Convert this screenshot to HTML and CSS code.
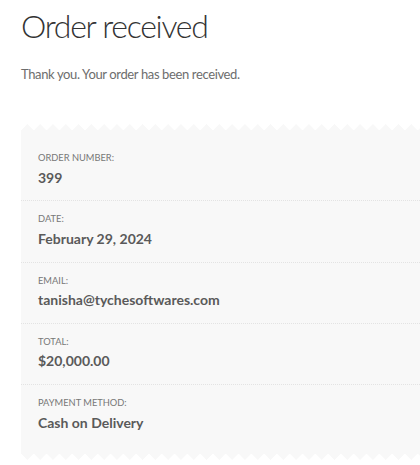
FILE: index.html
```html
<!DOCTYPE html>
<html>
<head>
    <title>Order received</title>
    <link rel="stylesheet" href="styles.css">
</head>
<body>
    <h1 class="entry-title">Order received</h1>

    <p class="thankyou">Thank you. Your order has been received.</p>

    <div class="order-overview">
        <ul class="order-details">
            <li>
                <span class="label">Order number:</span>
                <strong>399</strong>
            </li>
            <li>
                <span class="label">Date:</span>
                <strong>February 29, 2024</strong>
            </li>
            <li>
                <span class="label">Email:</span>
                <strong>tanisha@tychesoftwares.com</strong>
            </li>
            <li>
                <span class="label">Total:</span>
                <strong>$20,000.00</strong>
            </li>
            <li>
                <span class="label">Payment method:</span>
                <strong>Cash on Delivery</strong>
            </li>
        </ul>
    </div>
</body>
</html>
```

FILE: styles.css
```css
body {
    font-family: Lato, "Open Sans", sans-serif;
    color: #6d6d6d;
    margin: 0;
    padding: 0 0 0 21px;
    background: #fff;
}
.entry-title {
    font-size: 32px;
    font-weight: 300;
    color: #333;
    margin: 6px 0 0 0;
    line-height: 40px;
    letter-spacing: -1.3px;
}
.thankyou {
    font-size: 13px;
    margin: 18px 0 0 0;
    line-height: 20px;
    letter-spacing: -0.37px;
}
.order-overview {
    margin-top: 40px;
}
.order-overview::before,
.order-overview::after {
    content: "";
    display: block;
    height: 7px;
    background-size: 12.8px 7px;
    background-repeat: repeat-x;
}
.order-overview::before {
    background-image: conic-gradient(from 137deg at 50% 0, #f8f8f8 86deg, transparent 0);
}
.order-overview::after {
    background-image: conic-gradient(from -43deg at 50% 100%, #f8f8f8 86deg, transparent 0);
}
.order-details {
    list-style: none;
    margin: 0;
    padding: 9px 0 8px 0;
    background: #f8f8f8;
}
.order-details li {
    padding: 12px 17px 11.8px 17px;
    border-bottom: 1px dotted #e3e3e3;
    font-size: 9.3px;
    text-transform: uppercase;
    line-height: 12px;
    color: #777;
}
.order-details li:last-child {
    border-bottom: none;
}
.order-details .label {
    display: block;
}
.order-details strong {
    display: block;
    margin-top: 2.5px;
    text-transform: none;
    font-size: 14px;
    font-weight: 700;
    line-height: 22px;
    color: #5a5a5a;
}
```
